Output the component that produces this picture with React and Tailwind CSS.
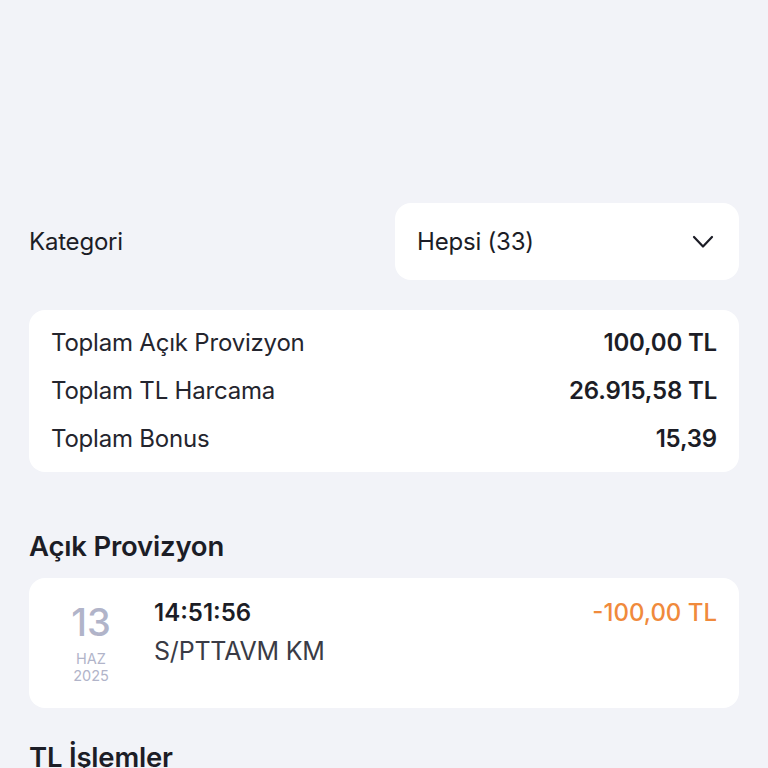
import React from 'react';

const totals = [
    { label: "Toplam Açık Provizyon", value: "100,00 TL" },
    { label: "Toplam TL Harcama", value: "26.915,58 TL" },
    { label: "Toplam Bonus", value: "15,39" },
];

function App() {
    return (
        <div className="w-screen min-h-screen bg-[#f2f3f8] px-[29px] pt-[203px] text-[#1c1d26]" style={{ fontFamily: 'Inter, "Noto Sans", sans-serif' }}>
            {/* Kategori seçimi */}
            <div className="flex items-center justify-between">
                <span className="text-[24px] tracking-[-0.2px]">Kategori</span>
                <button className="flex h-[77px] w-[344px] items-center justify-between rounded-2xl bg-white pl-[22px] pr-[25px]">
                    <span className="text-[24px] tracking-[-0.2px]">Hepsi (33)</span>
                    <svg width="22" height="14" viewBox="0 0 22 14" fill="none" stroke="#1c1d26" strokeWidth="2.2" strokeLinecap="round" strokeLinejoin="round">
                        <polyline points="2,2 11,11.5 20,2" />
                    </svg>
                </button>
            </div>

            {/* Toplamlar */}
            <div className="mt-[30px] rounded-2xl bg-white px-[22px] py-[9px]">
                {totals.map((row) => (
                    <div key={row.label} className="flex h-[48px] items-center justify-between">
                        <span className="text-[24px] tracking-[-0.2px] text-[#24252e]">{row.label}</span>
                        <span className="text-[24px] font-semibold tracking-[-0.2px]">{row.value}</span>
                    </div>
                ))}
            </div>

            {/* Açık provizyon */}
            <h2 className="mt-[57px] text-[27.5px] font-semibold leading-[34px] tracking-[-0.2px]">Açık Provizyon</h2>
            <div className="mt-[15px] flex h-[130px] rounded-2xl bg-white pl-[22px] pr-[22px] pt-[18px]">
                <div className="flex w-[80px] flex-col items-center text-[#b1b4c9]">
                    <span className="text-[38px] font-medium leading-[52px]">13</span>
                    <span className="mt-[2px] text-[14.5px] leading-[17px]">HAZ</span>
                    <span className="text-[14.5px] leading-[17px]">2025</span>
                </div>
                <div className="ml-[23px] flex flex-1 flex-col">
                    <span className="text-[24px] font-semibold leading-[34px]">14:51:56</span>
                    <span className="mt-[5px] text-[25px] leading-[32px] tracking-[-0.2px] text-[#3a3b45]">S/PTTAVM KM</span>
                </div>
                <span className="text-[24px] font-medium leading-[34px] text-[#f08a3c]">-100,00 TL</span>
            </div>

            <h2 className="mt-[32px] text-[27.5px] font-semibold leading-[34px] tracking-[-0.2px]">TL İşlemler</h2>
        </div>
    );
}

export default App;
